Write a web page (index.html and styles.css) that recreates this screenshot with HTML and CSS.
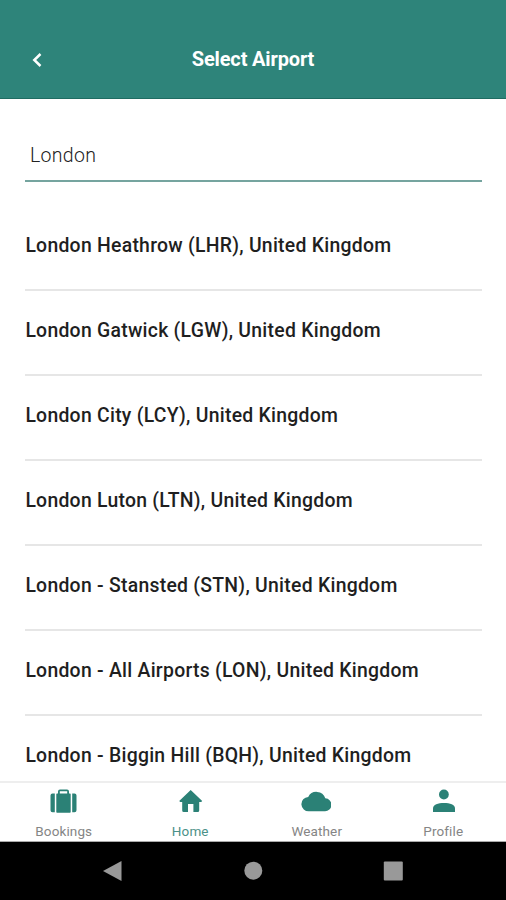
FILE: index.html
```html
<!DOCTYPE html>
<html lang="en">
<head>
<meta charset="utf-8">
<title>Select Airport</title>
<link rel="stylesheet" href="styles.css">
</head>
<body>
<div class="app">
  <header class="header">
    <svg class="back" viewBox="0 0 24 18"><path d="M15.500 4 9.300 10l6.200 6"/></svg>
    <h1 class="title">Select Airport</h1>
  </header>
  <main class="content">
    <div class="search"><span class="query">London</span></div>
    <ul class="list">
      <li class="row"><span class="name">London Heathrow (LHR), United Kingdom</span></li>
      <li class="row"><span class="name">London Gatwick (LGW), United Kingdom</span></li>
      <li class="row"><span class="name">London City (LCY), United Kingdom</span></li>
      <li class="row"><span class="name">London Luton (LTN), United Kingdom</span></li>
      <li class="row"><span class="name">London - Stansted (STN), United Kingdom</span></li>
      <li class="row"><span class="name">London - All Airports (LON), United Kingdom</span></li>
      <li class="row"><span class="name">London - Biggin Hill (BQH), United Kingdom</span></li>
    </ul>
  </main>
  <nav class="tabs">
    <div class="tab"><svg class="icon" viewBox="0 0 30 30"><path fill-rule="evenodd" d="M10 7.500V5.500q0-2 2-2h7q2 0 2 2v2h1q.7 0 .7.700V26q0 .7-.7.700H9q-.7 0-.7-.7V8.200q0-.7.700-.7zM11.800 7.500h7.400V5.300h-7.400zM6.800 7.500v18.700H4.500q-2 0-2-2V9.500q0-2 2-2zM24.200 7.500h2.300q2 0 2 2v14.700q0 2-2 2h-2.300z"/></svg><span class="label">Bookings</span></div>
    <div class="tab active"><svg class="icon" viewBox="0 0 30 30"><path d="M15.700 4 4.200 15l1 1h2v8.500q0 1.500 1.500 1.500H13v-8h5.400v8h4.300q1.500 0 1.500-1.500V16h2l1-1z"/></svg><span class="label">Home</span></div>
    <div class="tab"><svg class="icon" viewBox="0 0 30 30"><path d="M24.300 12.300A9.300 9.300 0 0 0 7.200 10.900 7.200 7.200 0 0 0 8 25.300h15.700a6.500 6.500 0 0 0 .6-13z"/></svg><span class="label">Weather</span></div>
    <div class="tab"><svg class="icon" viewBox="0 0 30 30"><circle cx="15.900" cy="8.500" r="4.900"/><path d="M5 26v-3.500c0-4 5-5.500 11-5.500s11 1.500 11 5.500V26z"/></svg><span class="label">Profile</span></div>
  </nav>
  <footer class="system">
    <svg class="key" viewBox="0 0 20 20"><path d="M18.500 0v20L0 10z"/></svg>
    <svg class="key" viewBox="0 0 20 20"><circle cx="10.300" cy="9.700" r="9"/></svg>
    <svg class="key" viewBox="0 0 20 20"><rect width="19" height="19" x=".8" y=".6" rx="1"/></svg>
  </footer>
</div>
</body>
</html>
```
FILE: styles.css
```css
* { box-sizing: border-box; }
body { margin: 0; font-family: Roboto, "Liberation Sans", sans-serif; }
.app { display: flex; flex-direction: column; width: 506px; height: 900px; background: #fff; overflow: hidden; }
.header { display: grid; grid-template-columns: 24px 1fr 24px; align-items: center; flex: none; height: 99px; padding: 20px 25px 0; border-bottom: 1px solid #1f6c62; background: #2e847a; color: #fff; }
.back { width: 24px; height: 18px; fill: none; stroke: #fff; stroke-width: 2.5; }
.title { margin: 0; text-align: center; font-size: 20px; font-weight: 700; line-height: 24px; letter-spacing: -0.15px; }
.content { flex: 1; min-height: 0; padding: 31px 24px 0 25px; overflow: hidden; }
.search { display: flex; align-items: center; height: 52px; padding-left: 5px; border-bottom: 2px solid #75a49f; }
.query { font-size: 19.5px; font-weight: 300; color: #222; letter-spacing: 0.3px; }
.list { margin: 24px 0 0; padding: 0; list-style: none; }
.row { display: flex; align-items: center; height: 85px; padding-bottom: 5px; border-bottom: 2px solid #e6e6e6; }
.name { padding-left: 0.4px; font-size: 19.4px; font-weight: 500; color: #1f1f1f; letter-spacing: 0.26px; white-space: nowrap; }
.tabs { display: grid; grid-template-columns: repeat(4, 1fr); flex: none; height: 61px; border-top: 2px solid #eee; border-bottom: 1px solid #aaa; }
.tab { display: flex; flex-direction: column; align-items: center; padding-top: 3px; color: #858585; }
.icon { width: 30px; height: 30px; fill: #2b8176; }
.label { margin-top: 6px; padding-left: 1px; font-size: 13.5px; line-height: 18px; letter-spacing: 0.12px; }
.active { color: #4b9188; }
.system { display: flex; justify-content: space-between; align-items: center; flex: none; height: 58px; padding: 0 103px; background: #000; }
.key { width: 20px; height: 20px; fill: #999; }
```
